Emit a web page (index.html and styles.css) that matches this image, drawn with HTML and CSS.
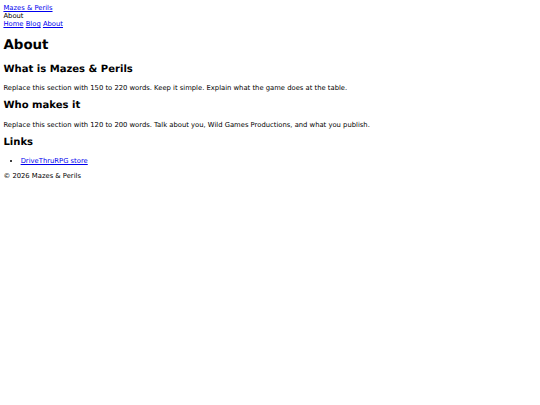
FILE: index.html
```html
<!DOCTYPE html>
<html lang="en">
<head>
<meta charset="utf-8">
<title>About - Mazes &amp; Perils</title>
<link rel="stylesheet" href="styles.css">
</head>
<body class="page">
  <header class="site-header">
    <div class="brand"><a href="#">Mazes &amp; Perils</a></div>
    <div class="crumb">About</div>
    <nav class="nav"><a href="#">Home</a> <a href="#">Blog</a> <a href="#">About</a></nav>
  </header>
  <main class="content">
    <h1 class="title">About</h1>
    <h2 class="section-title">What is Mazes &amp; Perils</h2>
    <p class="text">Replace this section with 150 to 220 words. Keep it simple. Explain what the game does at the table.</p>
    <h2 class="section-title">Who makes it</h2>
    <p class="text">Replace this section with 120 to 200 words. Talk about you, Wild Games Productions, and what you publish.</p>
    <h2 class="section-title">Links</h2>
    <ul class="links">
      <li><a href="#">DriveThruRPG store</a></li>
    </ul>
  </main>
  <footer class="site-footer">© 2026 Mazes &amp; Perils</footer>
</body>
</html>
```
FILE: styles.css
```css
.page {
  margin: 3.44px;
  padding-top: 0.4px;
  font-family: "DejaVu Sans", sans-serif;
  font-size: 6.8px;
  line-height: 8.17px;
  color: #000;
  background: #fff;
  text-rendering: geometricPrecision;
}
.page a {
  color: #0000ee;
}
.title {
  font-size: 13.4px;
  line-height: 16.34px;
  margin: 9.6px 0 9.22px;
}
.section-title {
  font-size: 10.05px;
  line-height: 12.04px;
  margin: 8.57px 0 8.1px;
}
.text {
  margin: 6.88px 0;
}
.links {
  margin: 6.88px 0 6px;
  padding-left: 17.2px;
}
```
